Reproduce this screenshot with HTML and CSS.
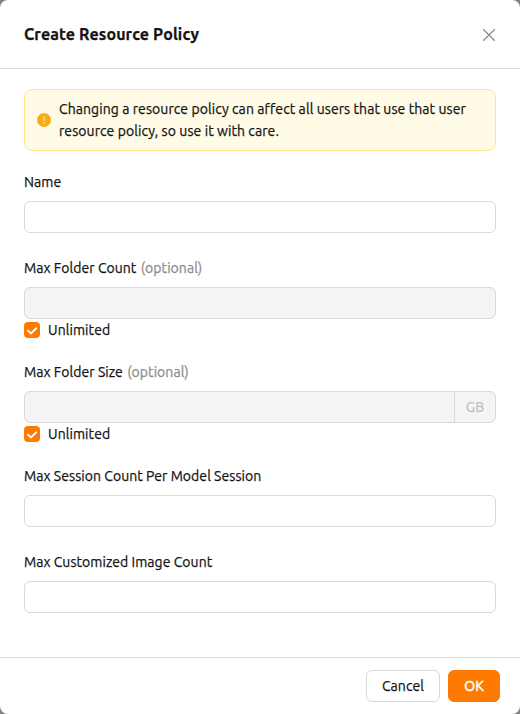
FILE: index.html
```html
<!DOCTYPE html>
<html lang="en">
<head>
<meta charset="utf-8">
<title>Create Resource Policy</title>
<link rel="stylesheet" href="styles.css">
</head>
<body>
<div class="modal">
  <header class="header">
    <h1 class="title">Create Resource Policy</h1>
    <svg class="close" viewBox="0 0 14 14" width="14" height="14"><path d="M1.2 1.2l11.6 11.6M12.8 1.2L1.2 12.8"/></svg>
  </header>
  <main class="body">
    <div class="alert">
      <svg class="warn" viewBox="0 0 14 14" width="14" height="14"><circle cx="7" cy="7" r="7" fill="#faad14"/><path d="M7 3.5v4.4" stroke="#fffbe6" stroke-width="1"/><circle cx="7" cy="9.8" r=".75" fill="#fffbe6"/></svg>
      <p class="message">Changing a resource policy can affect all users that use that user<br>resource policy, so use it with care.</p>
    </div>
    <div class="field"><label class="label">Name</label><div class="input"></div></div>
    <div class="field with-check"><label class="label">Max Folder Count <span class="optional">(optional)</span></label><div class="input disabled"></div>
      <div class="check"><span class="box"><svg viewBox="0 0 16 16" width="16" height="16"><path d="M3.4 8.1l3.6 3.3 5.8-5.7"/></svg></span>Unlimited</div></div>
    <div class="field with-check"><label class="label">Max Folder Size <span class="optional">(optional)</span></label><div class="input disabled"><span class="addon">GB</span></div>
      <div class="check"><span class="box"><svg viewBox="0 0 16 16" width="16" height="16"><path d="M3.4 8.1l3.6 3.3 5.8-5.7"/></svg></span>Unlimited</div></div>
    <div class="field"><label class="label">Max Session Count Per Model Session</label><div class="input"></div></div>
    <div class="field"><label class="label">Max Customized Image Count</label><div class="input"></div></div>
  </main>
  <footer class="footer"><button class="button">Cancel</button><button class="button primary">OK</button></footer>
</div>
</body>
</html>
```
FILE: styles.css
```css
* { box-sizing: border-box; }
body { margin: 0; background: #808080; color: #141414; font: 14px/22px Ubuntu, "Open Sans", "Noto Sans", sans-serif; letter-spacing: 0.08px; -webkit-text-stroke: 0.25px; }
.modal { height: 714px; display: flex; flex-direction: column; background: #fff; border-radius: 8px; overflow: hidden; }
.header { height: 69px; padding: 0 24px; display: flex; align-items: center; justify-content: space-between; border-bottom: 1px solid #d9d9d9; }
.title { margin: 0; font-size: 16px; line-height: 24px; font-weight: 700; letter-spacing: 0.12px; }
.close { fill: none; stroke: #8c8c8c; stroke-width: 1.3; margin-top: 2px; }
.body { flex: 1; padding: 20px 24px 0; }
.alert { height: 62px; display: flex; align-items: center; gap: 8px; padding: 0 12px; background: #fffbe6; border: 1px solid #ffe58f; border-radius: 8px; margin-bottom: 20px; }
.message { margin: 0; white-space: nowrap; }
.field { margin-bottom: 24px; }
.with-check { margin-bottom: 20px; }
.label { display: block; height: 22px; margin-bottom: 8px; letter-spacing: 0.055px; }
.optional { color: #8c8c8c; margin-left: 1px; }
.input { height: 32px; border: 1px solid #d9d9d9; border-radius: 6px; display: flex; justify-content: flex-end; }
.disabled { background: #f4f4f4; }
.addon { width: 41px; border-left: 1px solid #d9d9d9; color: #bfbfbf; text-align: center; line-height: 30px; }
.check { height: 22px; display: flex; align-items: center; gap: 8px; }
.box { width: 16px; height: 16px; border-radius: 4px; background: #ff7a00; }
.box svg { display: block; fill: none; stroke: #fff; stroke-width: 1.9; }
.footer { height: 57px; border-top: 1px solid #d9d9d9; padding: 12px 20px; display: flex; justify-content: flex-end; gap: 8px; }
.button { height: 32px; width: 74px; padding: 0; border: 1px solid #d9d9d9; border-radius: 6px; background: #fff; color: inherit; font: inherit; letter-spacing: inherit; }
.primary { width: 52px; border-color: #ff7a00; background: #ff7a00; color: #fff; -webkit-text-stroke: 0.5px; }
```
